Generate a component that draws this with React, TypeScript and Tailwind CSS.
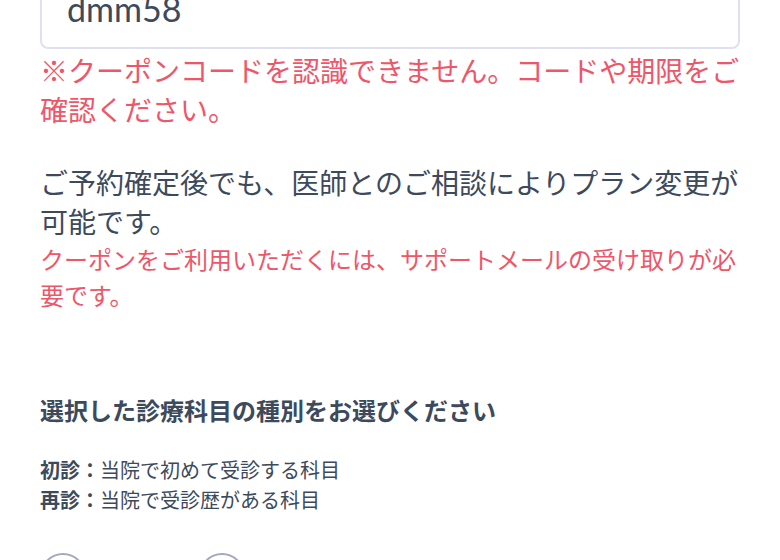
import React from "react";

export default function App() {
  return (
    <div
      className="w-[780px] h-[560px] overflow-hidden bg-white px-10"
      style={{ fontFamily: 'Lato, "Noto Sans CJK JP", sans-serif' }}
    >
      <div className="mt-[-32px] rounded-lg border-2 border-[#e1e0ee] pl-[25px] pt-[19px] pb-[18px]">
        <div className="text-[34px] leading-[40px] text-[#3d4a5c]">dmm58</div>
      </div>
      <p className="mt-[3px] text-[28px] leading-[39px] text-[#ee5669]">
        ※クーポンコードを認識できません。コードや期限をご確認ください。
      </p>
      <p className="mt-[34px] text-[28px] leading-[39px] text-[#3d4a5c]">
        ご予約確定後でも、医師とのご相談によりプラン変更が可能です。
      </p>
      <p className="text-[24px] leading-[36px] text-[#ee5669]">
        クーポンをご利用いただくには、サポートメールの受け取りが必要です。
      </p>
      <h2 className="mt-[79px] text-[24px] leading-[36px] font-bold text-[#3d4a5c]">
        選択した診療科目の種別をお選びください
      </h2>
      <div className="mt-[26px] text-[20px] leading-[30px] text-[#3d4a5c]">
        <p>
          <span className="font-bold">初診：</span>当院で初めて受診する科目
        </p>
        <p>
          <span className="font-bold">再診：</span>当院で受診歴がある科目
        </p>
      </div>
      <div className="mt-[38px] flex gap-[53px]">
        <label className="flex items-center gap-3">
          <span className="block h-[46px] w-[46px] rounded-full border-2 border-[#a6a8bd]" />
          <span className="text-[24px] text-[#3d4a5c]">初診</span>
        </label>
        <label className="flex items-center gap-3">
          <span className="block h-[46px] w-[46px] rounded-full border-2 border-[#a6a8bd]" />
          <span className="text-[24px] text-[#3d4a5c]">再診</span>
        </label>
      </div>
    </div>
  );
}
